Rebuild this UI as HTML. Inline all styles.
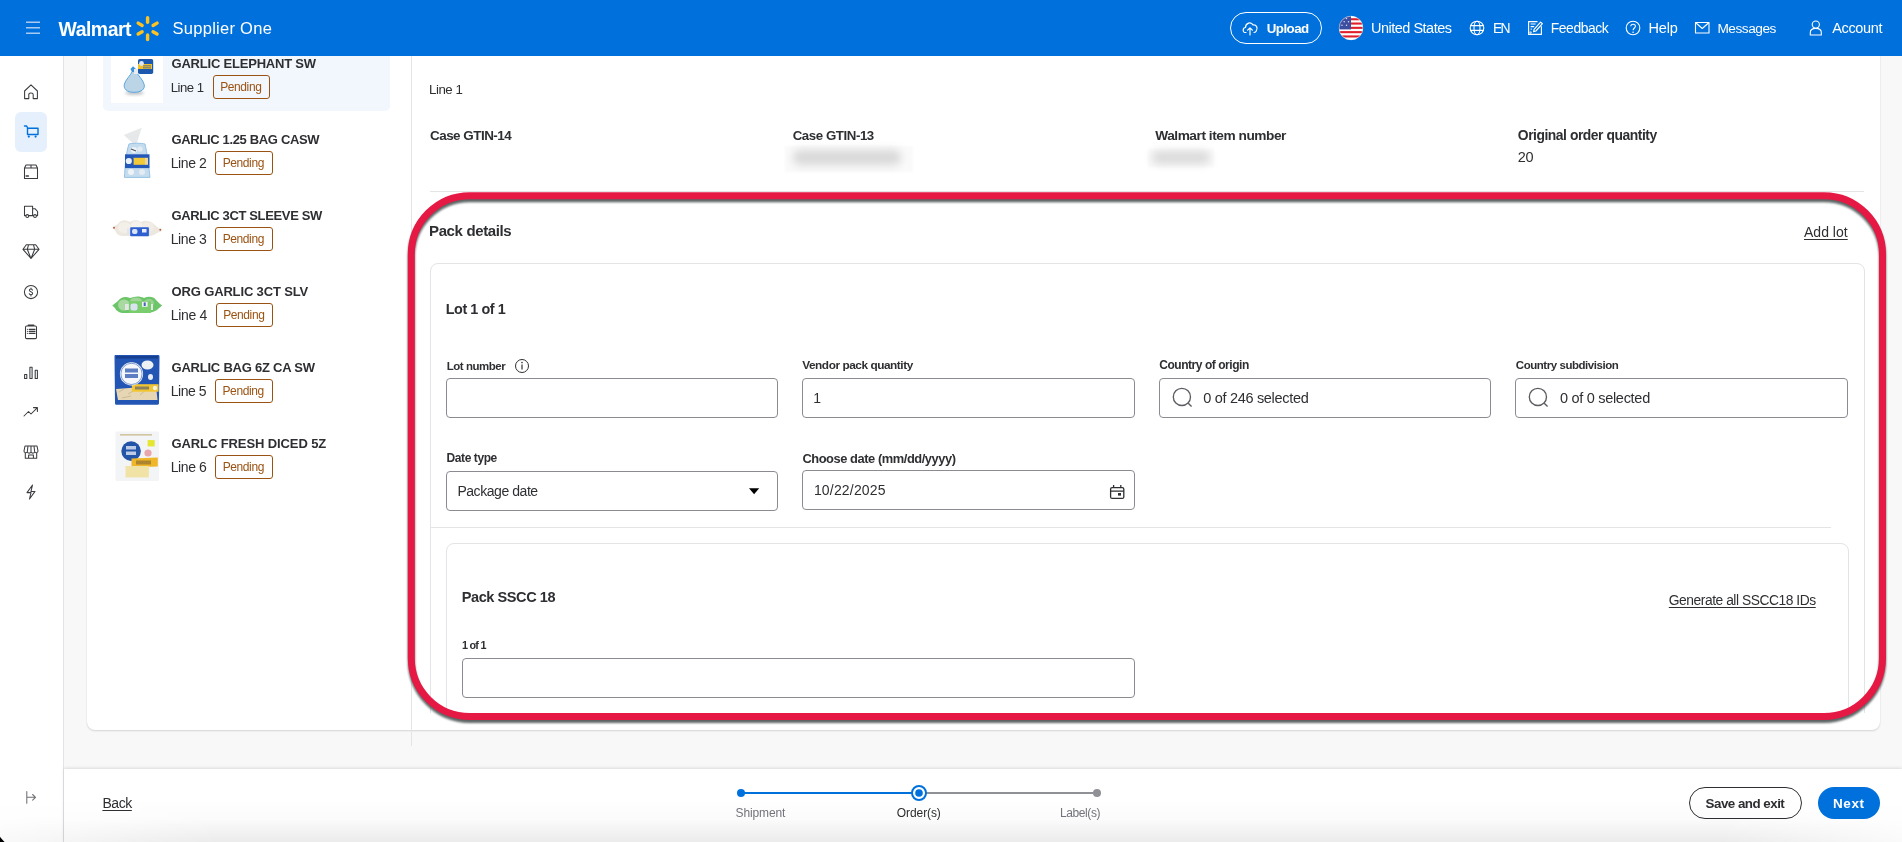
<!DOCTYPE html>
<html><head><meta charset="utf-8">
<style>
*{box-sizing:border-box;margin:0;padding:0}
html,body{width:1902px;height:842px;overflow:hidden;background:#f8f8f8;font-family:"Liberation Sans",sans-serif;color:#2e2f32}
.a{position:absolute}
.t{position:absolute;white-space:nowrap;line-height:1;font-family:"Liberation Sans",sans-serif}
#hdr{left:0;top:0;width:1902px;height:56px;background:#0071dc}
#nav{left:0;top:56px;width:64px;height:786px;background:#fff;border-right:1px solid #e3e4e5}
#card{left:87px;top:-20px;width:1793px;height:750px;background:#fff;border-radius:8px;box-shadow:0 1px 2px rgba(0,0,0,.14),0 0 1px rgba(0,0,0,.08)}
.inp{position:absolute;border:1px solid #8a8c92;border-radius:4px;background:#fff}
.badge{position:absolute;width:57.5px;height:23.5px;border:1px solid #9b5313;border-radius:3px}
.ico{position:absolute;overflow:visible}
</style></head><body>
<!-- main bg -->
<div id="card" class="a"></div>

<!-- selected list item -->
<div class="a" style="left:103px;top:40px;width:287px;height:70.5px;background:#f1f7fd;border-radius:5px"></div>
<div class="a" style="left:111px;top:50.6px;width:52px;height:52px;background:#fff"></div>

<!-- thumbnails -->
<svg class="ico" style="left:105px;top:45px" width="64" height="450" viewBox="105 45 64 450">
  <defs><filter id="sb" x="-20%" y="-20%" width="140%" height="140%"><feGaussianBlur stdDeviation="0.45"/></filter>
  <filter id="sb2" x="-50%" y="-50%" width="200%" height="200%"><feGaussianBlur stdDeviation="1.6"/></filter></defs>
  <g filter="url(#sb)">
  <!-- item1: elephant garlic mesh bag -->
  <ellipse cx="134.5" cy="92.8" rx="9.5" ry="2" fill="#8f9498" opacity=".6" filter="url(#sb2)"/>
  <path d="M132.2 71.5 C131 75 126 79 124.4 84 C123.2 88.5 126.5 92.3 134 92.3 C141.5 92.3 145.2 89 144.2 84.5 C143 79.5 137.5 75 136.2 71.5 Z" fill="#bcd5e6"/>
  <path d="M132.2 71.5 C131 75 126 79 124.4 84 C123.2 88.5 126.5 92.3 134 92.3 C141.5 92.3 145.2 89 144.2 84.5 C143 79.5 137.5 75 136.2 71.5 Z" fill="none" stroke="#4aa0e0" stroke-width=".9"/>
  <path d="M130.5 69 L133 66.3 L135.5 68.5 L136.4 72 L132 72 Z" fill="#3b93dc"/>
  <rect x="134" y="69" width="6.8" height="5" fill="#e9ecef"/>
  <rect x="138" y="59" width="15.2" height="15" rx="1.8" fill="#1f58ad"/>
  <rect x="138" y="64" width="14" height="5" fill="#f2c02c"/>
  <rect x="143" y="65.2" width="8" height="1.2" fill="#1f58ad" opacity=".6"/>
  <rect x="143" y="67.2" width="8" height="1.2" fill="#1f58ad" opacity=".6"/>
  <circle cx="141.5" cy="63.5" r="2.4" fill="#dfe8f2"/>
  <!-- item2: mesh bag with twist -->
  <path d="M123.8 135 L141.7 127.8 L136.9 143.3 L133 143.3 Z" fill="#e6e8ea"/>
  <path d="M129 144 C131 143 142 143 145 144 C147 152 149 168 150 177.4 L124.4 177.4 C125 168 126 152 129 144 Z" fill="#c5dcee"/>
  <path d="M129 144 C131 143 142 143 145 144 C147 152 149 168 150 177.4 L124.4 177.4 C125 168 126 152 129 144 Z" fill="none" stroke="#8dbde3" stroke-width=".9"/>
  <circle cx="134" cy="150" r="3" fill="#eef3f7"/><circle cx="140" cy="149" r="2.6" fill="#e4ecf3"/><circle cx="131" cy="172" r="3" fill="#eef3f7"/><circle cx="142" cy="172" r="3" fill="#e4ecf3"/>
  <path d="M131 149 L136 151" stroke="#4b5560" stroke-width="1.1"/>
  <rect x="125" y="154.3" width="24.5" height="13.8" fill="#2459b9"/>
  <circle cx="128.8" cy="161" r="3.1" fill="#e8f0f8"/>
  <rect x="133.6" y="157.8" width="11.5" height="7" fill="#f2c939"/>
  <rect x="145" y="157.8" width="3" height="7" fill="#e9d7a8"/>
  <!-- item3: white garlic sleeve -->
  <path d="M112.5 227 L118 224 C121 219 126 219.5 130 222 C133 219.5 138 219.5 141 222 C144 220 150 220 153 223.5 L160 229 L162 231 L157 233 C152 237 146 236.5 140 236 L126 236 C121 236.5 117 235 116 232 Z" fill="#ece7df"/>
  <ellipse cx="124.5" cy="227.5" rx="6.5" ry="5.5" fill="#f3efe9"/>
  <ellipse cx="136.5" cy="226" rx="6" ry="4.8" fill="#f5f2ed"/>
  <ellipse cx="148" cy="227" rx="6" ry="4.8" fill="#f1ede6"/>
  <rect x="127" y="228.5" width="23" height="6" fill="#e3e5ea"/>
  <rect x="130.2" y="227.3" width="18.7" height="9" rx=".8" fill="#2d5fd0"/>
  <rect x="132" y="229" width="5.5" height="5" rx="2" fill="#dbe3f6"/>
  <rect x="142" y="229" width="4.5" height="3.5" fill="#e8edf8"/>
  <circle cx="114" cy="227.8" r="1" fill="#c0593a"/>
  <circle cx="160.3" cy="229.7" r="1" fill="#c0593a"/>
  <!-- item4: green sleeve -->
  <path d="M112.3 305.5 L118 301 C121 296.5 126 296 130 298 C135 296 140 296 144 298 C148 296 154 296.5 156 300 L160 304 L162.2 305.5 L158 309 C154 313 148 313.1 140 313 L126 313 C120 313.5 116 311 115 308 Z" fill="#6cc569"/>
  <ellipse cx="124" cy="305" rx="6" ry="5.5" fill="#a8d9a0"/>
  <ellipse cx="136" cy="301" rx="6" ry="3.5" fill="#9fd597"/>
  <ellipse cx="149" cy="303" rx="5" ry="4" fill="#98d290"/>
  <rect x="125" y="304" width="28" height="6" fill="#e3e6e4"/>
  <rect x="128.9" y="301.2" width="22.1" height="11.8" rx=".8" fill="#7acd6c"/>
  <rect x="130.5" y="303.5" width="7" height="7" rx="2" fill="#d9e3f2"/>
  <rect x="142" y="301.8" width="5.6" height="5" fill="#eef3ee"/>
  <rect x="143.7" y="302.4" width="2" height="3.6" fill="#4463b7"/>
  <!-- item5: blue spice world bag -->
  <path d="M114.5 356 C114.5 355 115 355 116 355 L158 355 C159 355 159.5 355.5 159.5 356.5 L159 403 C159 404.5 158 404.8 156 404.8 L117 404.8 C115.5 404.8 115 404.3 115 403 Z" fill="#2255b4"/>
  <rect x="116" y="356" width="42" height="2.5" fill="#17408f"/>
  <path d="M116 389 L156 386 L157.5 400 L118 400 Z" fill="#e6d6b3"/>
  <path d="M119 392 L124 389 M128 394 L135 390 M140 395 L147 389 M122 398 L131 396" stroke="#c7b48a" stroke-width=".8"/>
  <rect x="131.9" y="384.2" width="26.7" height="7.5" fill="#f2c630"/>
  <rect x="135" y="386.5" width="14" height="3" fill="#3b4a83" opacity=".55"/>
  <circle cx="155" cy="388" r="2.2" fill="#f4f1e4"/>
  <circle cx="131.5" cy="373.9" r="11.6" fill="#f5f7fb"/>
  <circle cx="131.5" cy="373.9" r="10.6" fill="none" stroke="#2a5ab3" stroke-width=".6"/>
  <rect x="125" y="368.5" width="13" height="4" fill="#2a55b0" opacity=".75"/>
  <rect x="125" y="374" width="13" height="4" fill="#2a55b0" opacity=".75"/>
  <ellipse cx="147.5" cy="365" rx="6" ry="4.5" fill="#eef1f4"/>
  <ellipse cx="150.5" cy="377" rx="2.5" ry="3" fill="#e9edf3"/>
  <!-- item6: white spice world bag -->
  <rect x="115.5" y="431.5" width="43.5" height="49.5" rx="1.2" fill="#f3f4f5"/>
  <rect x="120" y="434" width="32" height="1.6" fill="#c8b98a" opacity=".8"/>
  <circle cx="131.1" cy="451.1" r="9.8" fill="#2354a8"/>
  <rect x="126" y="446" width="10" height="3.5" fill="#e2e9f5" opacity=".8"/>
  <rect x="126" y="451.5" width="10" height="3.5" fill="#e2e9f5" opacity=".8"/>
  <path d="M131.5 458.5 L157.8 457.5 L157.8 466.6 L131.5 467.6 Z" fill="#efb62a"/>
  <rect x="136" y="460.5" width="15" height="4" fill="#5a4a33" opacity=".45"/>
  <rect x="125.6" y="466" width="23.2" height="11.4" fill="#f1e2a6"/>
  <rect x="147.6" y="440.1" width="7.1" height="6.3" fill="#e5e631"/>
  <circle cx="148" cy="453" r="3.6" fill="#e8a6ad"/>
  </g>
</svg>

<!-- panel divider -->
<div class="a" style="left:411px;top:56px;width:1px;height:690px;background:#e3e4e5"></div>
<!-- detail divider -->
<div class="a" style="left:430px;top:191px;width:1434px;height:1px;background:#e3e4e5"></div>
<!-- blurred values -->
<div class="a" style="left:785px;top:146px;width:128px;height:26px;background:#fafafa;filter:blur(1px)"></div><div class="a" style="left:793px;top:150px;width:108px;height:15px;background:#d8d8d8;filter:blur(4.5px);border-radius:7px"></div>
<div class="a" style="left:1148px;top:149px;width:66px;height:18px;background:#fafafa;filter:blur(1px)"></div><div class="a" style="left:1152px;top:151px;width:58px;height:13px;background:#dadada;filter:blur(4px);border-radius:6px"></div>

<!-- clipped scroll area -->
<div class="a" style="left:412px;top:56px;width:1468px;height:657px;overflow:hidden">
  <div class="a" style="left:18px;top:207px;width:1435px;height:600px;border:1px solid #e3e4e5;border-radius:8px"></div>
  <div class="a" style="left:18px;top:471px;width:1401px;height:1px;background:#e3e4e5"></div>
  <div class="a" style="left:34px;top:487px;width:1403px;height:400px;border:1px solid #e3e4e5;border-radius:8px"></div>
</div>

<!-- inputs -->
<div class="inp" style="left:446px;top:378px;width:332px;height:40px"></div>
<div class="inp" style="left:802px;top:378px;width:333px;height:40px"></div>
<div class="inp" style="left:1159px;top:378px;width:332px;height:40px"></div>
<div class="inp" style="left:1515px;top:378px;width:333px;height:40px"></div>
<div class="inp" style="left:446px;top:471px;width:332px;height:40px"></div>
<div class="inp" style="left:802px;top:470px;width:333px;height:40px"></div>
<div class="inp" style="left:462px;top:658px;width:673px;height:40px"></div>

<!-- small form icons -->
<svg class="ico" style="left:0;top:0" width="1902" height="842" viewBox="0 0 1902 842">
  <!-- info -->
  <circle cx="522" cy="366" r="6.5" fill="none" stroke="#2e2f32" stroke-width="1"/>
  <rect x="521.4" y="364.5" width="1.2" height="5" fill="#2e2f32"/>
  <circle cx="522" cy="362.6" r=".8" fill="#2e2f32"/>
  <!-- search icons -->
  <g fill="none" stroke="#5a5c61" stroke-width="1.35">
    <circle cx="1181.9" cy="396.9" r="8.6"/>
    <path d="M1188.2 403.2 L1191.6 406.6"/>
    <circle cx="1537.9" cy="396.9" r="8.6"/>
    <path d="M1544.2 403.2 L1547.6 406.6"/>
  </g>
  <!-- select triangle -->
  <path d="M749 488.3 L759.2 488.3 L754.1 494.2 Z" fill="#000"/>
  <!-- calendar -->
  <g fill="none" stroke="#2e2f32" stroke-width="1.3">
    <rect x="1110.6" y="487.6" width="13.2" height="10.8" rx="1.5"/>
    <path d="M1110.6 491.2 H1123.8 M1113.6 485 V488 M1120.8 485 V488"/>
  </g>
  <rect x="1118" y="493" width="3" height="2.6" fill="#2e2f32"/>
</svg>

<!-- red annotation -->
<svg class="ico" style="left:0;top:0;filter:drop-shadow(0 3px 1.2px rgba(40,48,48,.75))" width="1902" height="842" viewBox="0 0 1902 842">
  <rect x="411.3" y="195.7" width="1471.2" height="520.8" rx="58.5" ry="58.5" fill="none" stroke="#e61844" stroke-width="7"/>
</svg>

<!-- badges -->
<div class="badge" style="left:212.7px;top:75.2px"></div><div class="badge" style="left:215.2px;top:151.2px"></div><div class="badge" style="left:215.2px;top:227.2px"></div><div class="badge" style="left:215.7px;top:303.2px"></div><div class="badge" style="left:215.0px;top:379.2px"></div><div class="badge" style="left:215.2px;top:455.2px"></div>

<!-- header -->
<div id="hdr" class="a"></div>
<svg class="ico" style="left:0;top:0" width="1902" height="56" viewBox="0 0 1902 56">
  <!-- hamburger -->
  <g stroke="#a8c9f1" stroke-width="1.6">
    <path d="M26 22.3 H40 M26 27.8 H40 M26 33.3 H40"/>
  </g>
  <!-- spark -->
  <g fill="#ffc220" transform="translate(147.6 28.6)">
    <rect x="-1.7" y="-12.6" width="3.4" height="8" rx="1.7"/>
    <rect x="-1.7" y="-12.6" width="3.4" height="8" rx="1.7" transform="rotate(60)"/>
    <rect x="-1.7" y="-12.6" width="3.4" height="8" rx="1.7" transform="rotate(120)"/>
    <rect x="-1.7" y="-12.6" width="3.4" height="8" rx="1.7" transform="rotate(180)"/>
    <rect x="-1.7" y="-12.6" width="3.4" height="8" rx="1.7" transform="rotate(240)"/>
    <rect x="-1.7" y="-12.6" width="3.4" height="8" rx="1.7" transform="rotate(300)"/>
  </g>
  <!-- upload button -->
  <rect x="1230.5" y="12.5" width="91" height="31" rx="15.5" fill="none" stroke="#fff" stroke-width="1"/>
  <g fill="none" stroke="#fff" stroke-width="1.2" stroke-linecap="round" stroke-linejoin="round">
    <path d="M1246 32.5 H1245 C1242.5 32.5 1242.5 27.5 1245.5 27.5 C1245.5 23 1251 21 1253 25 C1256.5 24.5 1258 28 1256.5 30.5 C1256 32 1255 32.5 1254 32.5"/>
    <path d="M1250 35 V28 M1247.6 30.2 L1250 27.8 L1252.4 30.2"/>
  </g>
  <!-- flag -->
  <defs><clipPath id="fc"><circle cx="1351" cy="28" r="12"/></clipPath></defs>
  <g clip-path="url(#fc)">
    <rect x="1338" y="15" width="26" height="26" fill="#fff"/>
    <rect x="1338" y="18.2" width="26" height="2.1" fill="#e0202c"/>
    <rect x="1338" y="22.5" width="26" height="2.1" fill="#e0202c"/>
    <rect x="1338" y="26.8" width="26" height="2.1" fill="#e0202c"/>
    <rect x="1338" y="31.1" width="26" height="2.1" fill="#e0202c"/>
    <rect x="1338" y="35.4" width="26" height="2.1" fill="#e0202c"/>
    <rect x="1338" y="15" width="13" height="14.4" fill="#3c4ea0"/>
    <g fill="#d8dcf0"><circle cx="1342" cy="18.5" r=".75"/><circle cx="1346.5" cy="18.5" r=".75"/><circle cx="1344.2" cy="21.8" r=".75"/><circle cx="1348.5" cy="21.8" r=".75"/><circle cx="1342" cy="25.2" r=".75"/><circle cx="1346.5" cy="25.2" r=".75"/></g>
  </g>
  <circle cx="1351" cy="28" r="11.8" fill="none" stroke="#fff" stroke-width=".6" opacity=".7"/>
  <!-- globe -->
  <g fill="none" stroke="#fff" stroke-width="1.1">
    <circle cx="1477" cy="28" r="6.8"/>
    <ellipse cx="1477" cy="28" rx="3" ry="6.8"/>
    <path d="M1470.5 25.6 H1483.5 M1470.5 30.4 H1483.5"/>
  </g>
  <!-- feedback -->
  <g fill="none" stroke="#fff" stroke-width="1.15" stroke-linejoin="round">
    <path d="M1537.5 21.6 H1528.6 V34.4 H1541.4 V26.2"/>
    <path d="M1530.6 24 H1535.6 M1530.6 26.6 H1534.2 M1530.6 29.1 H1531.8"/>
    <path d="M1533.6 31.6 L1534.1 29.4 L1540.6 22.1 L1542.4 23.7 L1535.9 31 Z"/>
  </g>
  <circle cx="1530.6" cy="32.6" r="1.3" fill="#fff" opacity=".7"/>
  <!-- help -->
  <g fill="none" stroke="#fff" stroke-width="1.1">
    <circle cx="1633" cy="28" r="6.8"/>
    <path d="M1630.8 26.2 C1630.8 23.5 1635.4 23.5 1635.4 26.2 C1635.4 28 1633.1 28 1633.1 30.2"/>
  </g>
  <circle cx="1633.1" cy="32.3" r=".8" fill="#fff"/>
  <!-- messages -->
  <g fill="none" stroke="#fff" stroke-width="1.1" stroke-linejoin="round">
    <rect x="1695.5" y="22.5" width="13.5" height="10.5"/>
    <path d="M1695.5 22.5 L1702.25 28.5 L1709 22.5"/>
  </g>
  <!-- account -->
  <g fill="none" stroke="#fff" stroke-width="1.1">
    <circle cx="1815.8" cy="24.6" r="3.6"/>
    <path d="M1810.3 35 V32.5 C1810.3 29.5 1812.3 28.4 1815.8 28.4 C1819.3 28.4 1821.3 29.5 1821.3 32.5 V35 Z"/>
  </g>
</svg>

<!-- left nav -->
<div id="nav" class="a"></div>
<div class="a" style="left:15px;top:112px;width:32px;height:40px;background:#e5f0fc;border-radius:6px"></div>
<svg class="ico" style="left:0;top:0" width="64" height="842" viewBox="0 0 64 842">
  <g fill="none" stroke="#3a3b3f" stroke-width="1.05" stroke-linejoin="round" stroke-linecap="round">
    <!-- home -->
    <path d="M24.6 91 L31 84.8 L37.4 91 V98.6 H33.2 V94.5 C33.2 92.5 28.8 92.5 28.8 94.5 V98.6 H24.6 Z"/>
    <!-- box -->
    <path d="M24.5 168 L26 165 H36 L37.5 168 V178.5 H24.5 Z M24.5 168 H37.5 M31 165 V168"/>
    <path d="M26.2 176 H28.4" stroke-width="1.5"/>
    <!-- truck -->
    <path d="M24.5 206.3 H32.6 V215.6 H24.5 Z M32.6 208.8 H35.2 L37.6 211.5 V215.6 H32.6"/>
    <circle cx="27.3" cy="216" r="1.4" fill="#fff"/>
    <circle cx="35" cy="216" r="1.4" fill="#fff"/>
    <!-- diamond -->
    <path d="M26.3 244.8 H35.7 L39 249.3 L31 258.5 L23 249.3 Z M23 249.3 H39 M28.5 244.8 L27.3 249.3 L31 258.5 L34.7 249.3 L33.5 244.8"/>
    <!-- dollar -->
    <circle cx="31" cy="292" r="6.6"/>
    <!-- clipboard -->
    <rect x="25.5" y="326" width="11" height="12.6" rx="1.2"/>
    <path d="M29.2 329.4 H35 M29.2 331.4 H35 M29.2 333.4 H35" stroke-width="1.1"/>
    <path d="M28.3 325.3 H33.7" stroke-width="1.6"/>
    <path d="M27.3 329.4 H27.6 M27.3 331.4 H27.6 M27.3 333.4 H27.6" stroke-width=".9"/>
    <!-- bars -->
    <path d="M24.6 374.5 H26.8 V378.4 H24.6 Z M29.9 367.2 H32.1 V378.4 H29.9 Z M35.2 370.2 H37.4 V378.4 H35.2 Z"/>
    <!-- trend -->
    <path d="M24 416 L28.5 411.5 L31 414 L37.2 407.8 M33.5 407.6 H37.4 V411.5"/>
    <!-- store -->
    <path d="M25 446 H37 L38 451 C38 452.5 36 453.5 34.8 452 C33.8 453.5 31.8 453.5 31 452 C30.2 453.5 28.2 453.5 27.2 452 C26 453.5 24 452.5 24 451 Z M25.3 453 V458.3 H36.7 V453 M28.6 458.3 V455 H33.4 V458.3 M28 446 L27.3 451.7 M34 446 L34.7 451.7 M31 446 V452"/>
    <!-- bolt -->
    <path d="M32.5 485 L27 492.6 H31 L29.5 499 L35 491.4 H31 Z"/>
    <!-- collapse -->
    <path d="M26.8 791.5 V803.2 M27 797.3 H35.5 M32.6 794.5 L35.5 797.3 L32.6 800.1" stroke="#6d6e72"/>
  </g>
  <path d="M32.9 289.6 C32.5 288.6 31.6 288.3 30.8 288.3 C29.6 288.3 28.9 289 28.9 289.9 C28.9 292 33.1 291.4 33.1 293.9 C33.1 294.9 32.2 295.6 31 295.6 C30 295.6 29.2 295.2 28.8 294.3 M31 287 V288.3 M31 295.6 V297" fill="none" stroke="#3a3b3f" stroke-width="1.3" stroke-linecap="round" transform="translate(31 292) scale(.78) translate(-31 -292)"/>
  <!-- cart (selected) -->
  <g fill="none" stroke="#0071dc" stroke-width="1.4" stroke-linejoin="round" stroke-linecap="round">
    <path d="M24.5 126 H26.6 L27.8 128.2 M27.5 128.2 H38 V134.5 H27.5 V128.2"/>
  </g>
  <circle cx="28.8" cy="136.6" r="1.1" fill="#0071dc"/>
  <circle cx="35.6" cy="136.6" r="1.1" fill="#0071dc"/>
</svg>

<!-- footer -->
<div class="a" style="left:64px;top:769px;width:1838px;height:73px;background:#fff;box-shadow:0 -1px 3px rgba(0,0,0,.12)"></div>
<div class="a" style="left:411px;top:730px;width:1px;height:16px;background:#e3e4e5"></div>
<svg class="ico" style="left:0;top:0" width="1902" height="842" viewBox="0 0 1902 842">
  <rect x="741" y="792" width="178" height="2" fill="#0071dc"/>
  <rect x="919" y="792" width="178" height="2" fill="#909196"/>
  <circle cx="741" cy="793" r="4" fill="#0071dc"/>
  <circle cx="919" cy="793" r="7" fill="#fff" stroke="#0071dc" stroke-width="2"/>
  <circle cx="919" cy="793" r="3.8" fill="#0071dc"/>
  <circle cx="1097" cy="793" r="4" fill="#909196"/>
  <rect x="1689.5" y="787.5" width="112" height="31" rx="15.5" fill="#fff" stroke="#2e2f32" stroke-width="1"/>
  <rect x="1818" y="787" width="62" height="32" rx="16" fill="#0071dc"/>
</svg>

<div style="position:absolute;left:0;top:0;width:1902px;height:842px;will-change:transform">
<div class="t" style="left:58.60px;top:19.90px;font-size:19.42px;font-weight:700;letter-spacing:-0.500px;word-spacing:0.00px;color:#ffffff;">Walmart</div>
<div class="t" style="left:172.50px;top:19.70px;font-size:16.5px;font-weight:400;letter-spacing:0.273px;word-spacing:0.00px;color:#ffffff;">Supplier One</div>
<div class="t" style="left:1266.80px;top:21.70px;font-size:13.34px;font-weight:700;letter-spacing:-0.560px;word-spacing:0.00px;color:#ffffff;">Upload</div>
<div class="t" style="left:1371.00px;top:21.00px;font-size:14.45px;font-weight:400;letter-spacing:-0.475px;word-spacing:0.00px;color:#ffffff;">United States</div>
<div class="t" style="left:1492.90px;top:22.00px;font-size:13.92px;font-weight:400;letter-spacing:-1.600px;word-spacing:0.00px;color:#ffffff;">EN</div>
<div class="t" style="left:1550.70px;top:22.10px;font-size:13.9px;font-weight:400;letter-spacing:-0.414px;word-spacing:0.00px;color:#ffffff;">Feedback</div>
<div class="t" style="left:1648.50px;top:21.10px;font-size:14.5px;font-weight:400;letter-spacing:-0.167px;word-spacing:0.00px;color:#ffffff;">Help</div>
<div class="t" style="left:1717.40px;top:22.10px;font-size:13.69px;font-weight:400;letter-spacing:-0.486px;word-spacing:0.00px;color:#ffffff;">Messages</div>
<div class="t" style="left:1832.30px;top:21.10px;font-size:14.5px;font-weight:400;letter-spacing:-0.367px;word-spacing:0.00px;color:#ffffff;">Account</div>
<div class="t" style="left:171.50px;top:56.60px;font-size:13px;font-weight:700;letter-spacing:-0.206px;word-spacing:0.00px;color:#2e2f32;">GARLIC ELEPHANT SW</div>
<div class="t" style="left:170.70px;top:80.90px;font-size:13.15px;font-weight:400;letter-spacing:-0.500px;word-spacing:0.00px;color:#2e2f32;">Line 1</div>
<div class="t" style="left:220.20px;top:81.20px;font-size:12px;font-weight:400;letter-spacing:-0.400px;word-spacing:0.00px;color:#9b5313;">Pending</div>
<div class="t" style="left:171.50px;top:132.60px;font-size:13px;font-weight:700;letter-spacing:-0.342px;word-spacing:0.00px;color:#2e2f32;">GARLIC 1.25 BAG CASW</div>
<div class="t" style="left:170.70px;top:155.90px;font-size:14px;font-weight:400;letter-spacing:-0.400px;word-spacing:0.00px;color:#2e2f32;">Line 2</div>
<div class="t" style="left:222.70px;top:157.20px;font-size:12px;font-weight:400;letter-spacing:-0.400px;word-spacing:0.00px;color:#9b5313;">Pending</div>
<div class="t" style="left:171.50px;top:208.60px;font-size:13px;font-weight:700;letter-spacing:-0.347px;word-spacing:0.00px;color:#2e2f32;">GARLIC 3CT SLEEVE SW</div>
<div class="t" style="left:170.70px;top:231.90px;font-size:14px;font-weight:400;letter-spacing:-0.400px;word-spacing:0.00px;color:#2e2f32;">Line 3</div>
<div class="t" style="left:222.70px;top:233.20px;font-size:12px;font-weight:400;letter-spacing:-0.400px;word-spacing:0.00px;color:#9b5313;">Pending</div>
<div class="t" style="left:171.50px;top:284.60px;font-size:13px;font-weight:700;letter-spacing:-0.141px;word-spacing:0.00px;color:#2e2f32;">ORG GARLIC 3CT SLV</div>
<div class="t" style="left:170.70px;top:307.90px;font-size:14px;font-weight:400;letter-spacing:-0.300px;word-spacing:0.00px;color:#2e2f32;">Line 4</div>
<div class="t" style="left:223.20px;top:309.20px;font-size:12px;font-weight:400;letter-spacing:-0.400px;word-spacing:0.00px;color:#9b5313;">Pending</div>
<div class="t" style="left:171.50px;top:360.60px;font-size:13px;font-weight:700;letter-spacing:-0.222px;word-spacing:0.00px;color:#2e2f32;">GARLIC BAG 6Z CA SW</div>
<div class="t" style="left:170.70px;top:383.90px;font-size:14px;font-weight:400;letter-spacing:-0.440px;word-spacing:0.00px;color:#2e2f32;">Line 5</div>
<div class="t" style="left:222.50px;top:385.20px;font-size:12px;font-weight:400;letter-spacing:-0.400px;word-spacing:0.00px;color:#9b5313;">Pending</div>
<div class="t" style="left:171.50px;top:436.60px;font-size:13px;font-weight:700;letter-spacing:-0.105px;word-spacing:0.00px;color:#2e2f32;">GARLC FRESH DICED 5Z</div>
<div class="t" style="left:170.70px;top:459.90px;font-size:14px;font-weight:400;letter-spacing:-0.400px;word-spacing:0.00px;color:#2e2f32;">Line 6</div>
<div class="t" style="left:222.70px;top:461.20px;font-size:12px;font-weight:400;letter-spacing:-0.400px;word-spacing:0.00px;color:#9b5313;">Pending</div>
<div class="t" style="left:429.00px;top:83.30px;font-size:13.26px;font-weight:400;letter-spacing:-0.440px;word-spacing:0.00px;color:#2e2f32;">Line 1</div>
<div class="t" style="left:430.00px;top:129.10px;font-size:13.44px;font-weight:700;letter-spacing:-0.509px;word-spacing:0.00px;color:#2e2f32;">Case GTIN-14</div>
<div class="t" style="left:792.70px;top:128.80px;font-size:13.27px;font-weight:700;letter-spacing:-0.427px;word-spacing:0.00px;color:#2e2f32;">Case GTIN-13</div>
<div class="t" style="left:1155.20px;top:129.00px;font-size:13.7px;font-weight:700;letter-spacing:-0.456px;word-spacing:0.00px;color:#2e2f32;">Walmart item number</div>
<div class="t" style="left:1517.80px;top:129.00px;font-size:13.88px;font-weight:700;letter-spacing:-0.464px;word-spacing:0.00px;color:#2e2f32;">Original order quantity</div>
<div class="t" style="left:1517.80px;top:150.40px;font-size:14.5px;font-weight:400;letter-spacing:-0.400px;word-spacing:0.00px;color:#2e2f32;">20</div>
<div class="t" style="left:429.00px;top:222.80px;font-size:15px;font-weight:700;letter-spacing:-0.364px;word-spacing:0.00px;color:#2e2f32;">Pack details</div>
<div class="t" style="left:1804.00px;top:224.50px;font-size:14px;font-weight:400;letter-spacing:0.017px;word-spacing:0.00px;color:#2e2f32;text-decoration:underline;text-underline-offset:2px;">Add lot</div>
<div class="t" style="left:445.70px;top:302.00px;font-size:14.38px;font-weight:700;letter-spacing:-0.422px;word-spacing:0.00px;color:#2e2f32;">Lot 1 of 1</div>
<div class="t" style="left:446.70px;top:360.50px;font-size:11.46px;font-weight:700;letter-spacing:-0.444px;word-spacing:0.00px;color:#2e2f32;">Lot number</div>
<div class="t" style="left:802.20px;top:359.80px;font-size:11.82px;font-weight:700;letter-spacing:-0.442px;word-spacing:0.00px;color:#2e2f32;">Vendor pack quantity</div>
<div class="t" style="left:1159.20px;top:359.00px;font-size:12.0px;font-weight:700;letter-spacing:-0.450px;word-spacing:0.00px;color:#2e2f32;">Country of origin</div>
<div class="t" style="left:1515.80px;top:360.00px;font-size:11.49px;font-weight:700;letter-spacing:-0.444px;word-spacing:0.00px;color:#2e2f32;">Country subdivision</div>
<div class="t" style="left:813.20px;top:390.70px;font-size:14px;font-weight:400;letter-spacing:0.000px;word-spacing:0.00px;color:#2e2f32;">1</div>
<div class="t" style="left:1203.30px;top:391.40px;font-size:14.5px;font-weight:400;letter-spacing:-0.312px;word-spacing:0.00px;color:#2e2f32;">0 of 246 selected</div>
<div class="t" style="left:1559.90px;top:391.40px;font-size:14.5px;font-weight:400;letter-spacing:-0.286px;word-spacing:0.00px;color:#2e2f32;">0 of 0 selected</div>
<div class="t" style="left:446.60px;top:452.30px;font-size:12px;font-weight:700;letter-spacing:-0.425px;word-spacing:0.00px;color:#2e2f32;">Date type</div>
<div class="t" style="left:457.40px;top:484.40px;font-size:14.01px;font-weight:400;letter-spacing:-0.445px;word-spacing:0.00px;color:#2e2f32;">Package date</div>
<div class="t" style="left:802.40px;top:452.50px;font-size:12.87px;font-weight:700;letter-spacing:-0.435px;word-spacing:0.00px;color:#2e2f32;">Choose date (mm/dd/yyyy)</div>
<div class="t" style="left:813.90px;top:482.80px;font-size:14px;font-weight:400;letter-spacing:0.178px;word-spacing:0.00px;color:#2e2f32;">10/22/2025</div>
<div class="t" style="left:461.80px;top:590.00px;font-size:14.56px;font-weight:700;letter-spacing:-0.445px;word-spacing:0.00px;color:#2e2f32;">Pack SSCC 18</div>
<div class="t" style="left:1668.80px;top:594.30px;font-size:13.82px;font-weight:400;letter-spacing:-0.455px;word-spacing:0.00px;color:#2e2f32;text-decoration:underline;text-underline-offset:2px;">Generate all SSCC18 IDs</div>
<div class="t" style="left:461.90px;top:639.90px;font-size:10.8px;font-weight:700;letter-spacing:-0.720px;word-spacing:0.00px;color:#2e2f32;">1 of 1</div>
<div class="t" style="left:102.40px;top:795.80px;font-size:14px;font-weight:400;letter-spacing:-0.433px;word-spacing:0.00px;color:#2e2f32;text-decoration:underline;text-underline-offset:2px;">Back</div>
<div class="t" style="left:735.60px;top:806.60px;font-size:12px;font-weight:400;letter-spacing:-0.143px;word-spacing:0.00px;color:#74767c;">Shipment</div>
<div class="t" style="left:896.80px;top:806.60px;font-size:12px;font-weight:400;letter-spacing:-0.086px;word-spacing:0.00px;color:#2e2f32;">Order(s)</div>
<div class="t" style="left:1060.10px;top:806.90px;font-size:12px;font-weight:400;letter-spacing:-0.429px;word-spacing:0.00px;color:#74767c;">Label(s)</div>
<div class="t" style="left:1705.60px;top:796.90px;font-size:13.37px;font-weight:700;letter-spacing:-0.517px;word-spacing:0.00px;color:#2e2f32;">Save and exit</div>
<div class="t" style="left:1833.00px;top:796.90px;font-size:13.5px;font-weight:700;letter-spacing:0.600px;word-spacing:0.00px;color:#ffffff;">Next</div>
</div>

<!-- bottom vignette -->
<div class="a" style="left:0;top:800px;width:1902px;height:42px;background:linear-gradient(to bottom,rgba(0,0,0,0) 0%,rgba(0,0,0,.015) 45%,rgba(0,0,0,.08) 100%);-webkit-mask-image:linear-gradient(to right,rgba(0,0,0,.3) 0,#000 220px,#000 1720px,rgba(0,0,0,.25) 1902px);mask-image:linear-gradient(to right,rgba(0,0,0,.3) 0,#000 220px,#000 1720px,rgba(0,0,0,.25) 1902px);pointer-events:none"></div>
<svg class="ico" style="left:0;top:830px" width="12" height="12" viewBox="0 830 12 12">
  <path d="M0 836.8 C1.5 839 3 840.5 4.6 842 L0 842 Z" fill="#000"/>
</svg>
</body></html>
